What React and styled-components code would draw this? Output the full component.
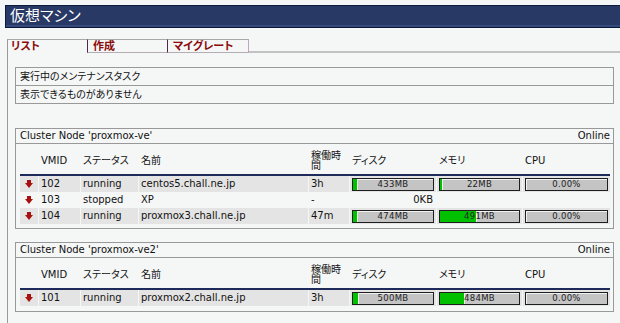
import styled, { createGlobalStyle } from 'styled-components';

const GlobalStyle = createGlobalStyle`
  body {
    margin: 0;
    background: #f5f7f7;
    font-family: "DejaVu Sans", "Noto Sans CJK JP", sans-serif;
    font-size: 10px;
    color: #111111;
    font-feature-settings: "palt";
  }
`;

const Page = styled.div`
  padding-top: 5px;
  height: 318px;
  overflow: hidden;
`;

const TitleBar = styled.h1`
  margin: 0 0 0 5px;
  height: 21px;
  padding-left: 4px;
  background: #283966;
  border-top: 1px solid #0c1a3e;
  border-left: 1px solid #0c1a3e;
  border-bottom: 1px solid #0a1436;
  box-shadow: inset 0 -2px 0 #34497c;
  color: #ffffff;
  font-size: 15px;
  font-weight: normal;
  line-height: 20px;
`;

const Tabs = styled.div`
  display: flex;
  margin: 11px 0 0 7px;
  height: 14px;
`;

const Tab = styled.div`
  box-sizing: border-box;
  width: ${(p) => p.$width}px;
  height: 14px;
  padding-left: ${(p) => (p.$active ? 3 : 5)}px;
  border-top: 1px solid #a8a8a8;
  border-left: 1px solid ${(p) => (p.$active ? '#9a9a9a' : '#4a2a46')};
  border-right: ${(p) => (p.$last ? '1px solid #c8a0c0' : 'none')};
  border-bottom: ${(p) => (p.$active ? 'none' : '1px solid #b4aeb4')};
  color: #8b0a0a;
  font-size: 11px;
  font-weight: bold;
  line-height: 13px;
`;

const TabFill = styled.div`
  flex: 1;
  border-bottom: 2px solid #c2c2c2;
`;

const Panel = styled.div`
  margin-left: 7px;
  padding: 14px 6px 0 7px;
  border-left: 1px solid #9a9a9a;
  height: 300px;
`;

const Box = styled.div`
  border: 1px solid #999999;
  margin-top: ${(p) => p.$gap}px;
`;

const InfoRow = styled.div`
  height: 17px;
  line-height: 17px;
  padding-left: 4px;
  & + & {
    border-top: 1px solid #999999;
  }
`;

const NodeHeader = styled.div`
  display: flex;
  justify-content: space-between;
  height: 14px;
  line-height: 14px;
  padding: 0 3px 0 4px;
  border-bottom: 1px solid #999999;
`;

const Table = styled.table`
  width: 590px;
  margin: 1px 0 ${(p) => p.$bottom}px 4px;
  border-collapse: collapse;
  table-layout: fixed;
`;

const Th = styled.th`
  height: 26px;
  padding: 3px 3px 0;
  border-bottom: 2px solid #1e2a5a;
  text-align: left;
  vertical-align: middle;
  font-weight: normal;
  line-height: 10px;
`;

const Row = styled.tr`
  height: 16px;
  background: ${(p) => (p.$shade ? '#e4e4e4' : 'transparent')};
  td + td {
    box-shadow: ${(p) => (p.$shade ? 'inset 1px 0 0 #f5f7f7' : 'none')};
  }
`;

const Td = styled.td`
  padding: 0 ${(p) => (p.$bar ? '2px 0 3px' : '3px')};
  line-height: 16px;
  white-space: nowrap;
  text-align: ${(p) => (p.$right ? 'right' : 'left')};
  vertical-align: middle;
`;

const ArrowCell = styled.td`
  padding: 0 0 0 5px;
  vertical-align: middle;
  line-height: 0;
`;

const Bar = styled.div`
  position: relative;
  box-sizing: border-box;
  height: 13px;
  border: 1px solid #1e1e1e;
  background: #c4c4c4;
  box-shadow: inset 1px 1px 0 #f2f2f2;
`;

const BarFill = styled.div`
  position: absolute;
  left: 0;
  top: 0;
  bottom: 0;
  background: #00c000;
  border-right: 1px solid #e8ffe8;
`;

const BarLabel = styled.span`
  position: absolute;
  inset: 0;
  text-align: center;
  font-size: 8.5px;
  line-height: 11px;
  letter-spacing: 0.3px;
  color: #222222;
`;

const DownArrow = () => (
  <svg width="8" height="8" viewBox="0 0 8 8">
    <path d="M2 0h4v3h2L4 8 0 3h2z" fill="#a81010" />
  </svg>
);

const Meter = ({ pct, label }) => (
  <Bar>
    {pct > 0 && <BarFill style={{ width: `${pct}%` }} />}
    <BarLabel>{label}</BarLabel>
  </Bar>
);

const nodes = [
  {
    name: 'proxmox-ve',
    gap: 24,
    bottom: 4,
    vms: [
      { id: 102, status: 'running', name: 'centos5.chall.ne.jp', up: '3h', disk: [5, '433MB'], mem: [2, '22MB'], cpu: [0, '0.00%'] },
      { id: 103, status: 'stopped', name: 'XP', up: '-', size: '0KB' },
      { id: 104, status: 'running', name: 'proxmox3.chall.ne.jp', up: '47m', disk: [5, '474MB'], mem: [46, '491MB'], cpu: [0, '0.00%'] },
    ],
  },
  {
    name: 'proxmox-ve2',
    gap: 13,
    bottom: 5,
    vms: [
      { id: 101, status: 'running', name: 'proxmox2.chall.ne.jp', up: '3h', disk: [6, '500MB'], mem: [30, '484MB'], cpu: [0, '0.00%'] },
    ],
  },
];

const NodeTable = ({ node }) => (
  <Box $gap={node.gap}>
    <NodeHeader>
      <span>Cluster Node '{node.name}'</span>
      <span>Online</span>
    </NodeHeader>
    <Table $bottom={node.bottom}>
      <colgroup>
        <col style={{ width: 18 }} />
        <col style={{ width: 42 }} />
        <col style={{ width: 58 }} />
        <col style={{ width: 170 }} />
        <col style={{ width: 41 }} />
        <col style={{ width: 87 }} />
        <col style={{ width: 86 }} />
        <col style={{ width: 88 }} />
      </colgroup>
      <thead>
        <tr>
          <Th />
          <Th>VMID</Th>
          <Th>ステータス</Th>
          <Th>名前</Th>
          <Th>稼働時間</Th>
          <Th>ディスク</Th>
          <Th>メモリ</Th>
          <Th>CPU</Th>
        </tr>
      </thead>
      <tbody>
        {node.vms.map((vm, i) => (
          <Row key={vm.id} $shade={i % 2 === 0}>
            <ArrowCell>
              <DownArrow />
            </ArrowCell>
            <Td>{vm.id}</Td>
            <Td>{vm.status}</Td>
            <Td>{vm.name}</Td>
            <Td>{vm.up}</Td>
            {vm.disk ? (
              <>
                <Td $bar><Meter pct={vm.disk[0]} label={vm.disk[1]} /></Td>
                <Td $bar><Meter pct={vm.mem[0]} label={vm.mem[1]} /></Td>
                <Td $bar><Meter pct={vm.cpu[0]} label={vm.cpu[1]} /></Td>
              </>
            ) : (
              <>
                <Td $right>{vm.size}</Td>
                <Td />
                <Td />
              </>
            )}
          </Row>
        ))}
      </tbody>
    </Table>
  </Box>
);

export default function App() {
  return (
    <Page>
      <GlobalStyle />
      <TitleBar>仮想マシン</TitleBar>
      <Tabs>
        <Tab $active $width={80}>リスト</Tab>
        <Tab $width={80}>作成</Tab>
        <Tab $last $width={82}>マイグレート</Tab>
        <TabFill />
      </Tabs>
      <Panel>
        <Box $gap={0}>
          <InfoRow>実行中のメンテナンスタスク</InfoRow>
          <InfoRow>表示できるものがありません</InfoRow>
        </Box>
        {nodes.map((n) => (
          <NodeTable key={n.name} node={n} />
        ))}
      </Panel>
    </Page>
  );
}
